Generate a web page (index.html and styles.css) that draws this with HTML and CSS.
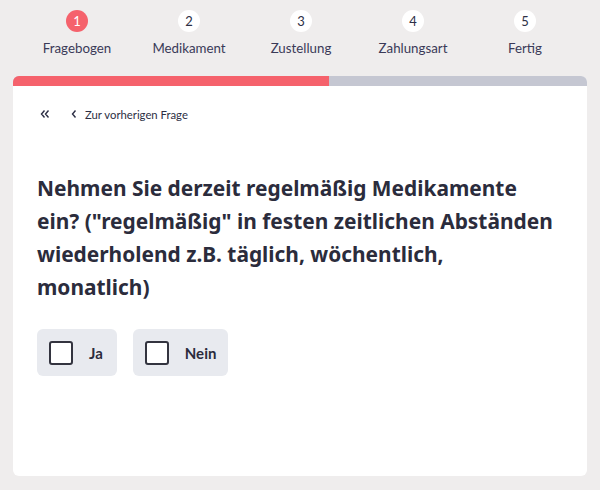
FILE: index.html
```html
<!DOCTYPE html>
<html lang="de">
<head>
<meta charset="utf-8">
<title>Fragebogen</title>
<link rel="stylesheet" href="styles.css">
</head>
<body>
<div class="stepper">
  <div class="step active"><span class="dot">1</span><span class="label">Fragebogen</span></div>
  <div class="step"><span class="dot">2</span><span class="label">Medikament</span></div>
  <div class="step"><span class="dot">3</span><span class="label">Zustellung</span></div>
  <div class="step"><span class="dot">4</span><span class="label">Zahlungsart</span></div>
  <div class="step"><span class="dot">5</span><span class="label">Fertig</span></div>
</div>
<div class="card">
  <div class="progress"><div class="fill" style="width:55%"></div></div>
  <div class="body">
    <div class="nav">
      <span class="first">
        <svg width="10" height="10" viewBox="0 0 10 10"><path d="M4.5 1.5L1.5 5l3 3.5M8.5 1.5L5.5 5l3 3.5" fill="none" stroke="#2d2f45" stroke-width="1.4"/></svg>
      </span>
      <span class="prev">
        <svg width="6" height="10" viewBox="0 0 6 10"><path d="M4.5 1.5L1.5 5l3 3.5" fill="none" stroke="#2d2f45" stroke-width="1.4"/></svg>
        Zur vorherigen Frage
      </span>
    </div>
    <h1 class="question">Nehmen Sie derzeit regelmäßig Medikamente<br>ein? ("regelmäßig" in festen zeitlichen Abständen<br>wiederholend z.B. täglich, wöchentlich,<br>monatlich)</h1>
    <div class="options">
      <label class="option"><span class="box"></span><span class="opt-text">Ja</span></label>
      <label class="option"><span class="box"></span><span class="opt-text">Nein</span></label>
    </div>
  </div>
</div>
</body>
</html>
```
FILE: styles.css
```css
* { box-sizing: border-box; }
body {
  margin: 0;
  background: #efeded;
  font-family: "Lato", "Noto Sans", sans-serif;
  color: #2d2f45;
}
.stepper {
  display: grid;
  grid-template-columns: repeat(5, 112px);
  padding: 10px 0 0 21px;
  height: 76px;
}
.step {
  display: flex;
  flex-direction: column;
  align-items: center;
  gap: 6px;
}
.dot {
  width: 22px;
  height: 22px;
  border-radius: 50%;
  background: #fff;
  display: flex;
  align-items: center;
  justify-content: center;
  font-size: 13px;
  color: #2d2f45;
}
.step.active .dot {
  background: #f5626c;
  color: #fff;
}
.label {
  font-size: 13.3px;
  line-height: 18px;
  padding-top: 1px;
  color: #3a3a58;
}
.card {
  margin: 0 13px;
  height: 400px;
  background: #fff;
  border-radius: 6px;
  overflow: hidden;
}
.progress {
  height: 10px;
  background: #c5c7d2;
}
.fill {
  height: 100%;
  background: #f5626c;
}
.body {
  padding: 21px 24px 0 24px;
}
.nav {
  display: flex;
  align-items: center;
  gap: 21px;
  font-size: 11.3px;
  height: 14px;
  padding-left: 3px;
}
.nav .prev {
  display: flex;
  align-items: center;
  gap: 8px;
}
.nav svg { display: block; }
.question {
  margin: 51px 0 0 0;
  font-family: "Noto Sans", "Lato", sans-serif;
  font-size: 20.9px;
  line-height: 33px;
  font-weight: 700;
  color: #2b2c3c;
}
.options {
  display: flex;
  gap: 16px;
  margin-top: 25px;
}
.option {
  display: flex;
  align-items: center;
  height: 47px;
  padding: 0 12px;
  background: #e8eaef;
  border-radius: 6px;
  gap: 16px;
}
.option:first-child { padding-right: 14px; }
.box {
  width: 24px;
  height: 24px;
  border: 2px solid #33343f;
  border-radius: 3px;
  background: #fff;
}
.opt-text {
  font-size: 15px;
  font-weight: 700;
  color: #2b2c3c;
}
```
